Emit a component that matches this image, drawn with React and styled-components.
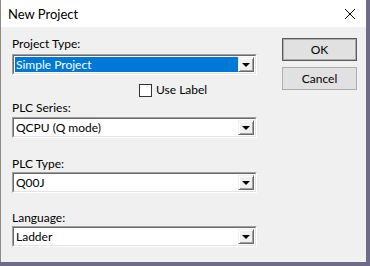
import React from 'react';
import styled, { createGlobalStyle } from 'styled-components';

const GlobalStyle = createGlobalStyle`
  html, body {
    margin: 0;
    padding: 0;
    background: #6e6b88;
  }
  body {
    width: 370px;
    height: 266px;
    overflow: hidden;
    font-family: Lato, "Noto Sans", sans-serif;
    font-size: 12px;
    color: #000;
  }
`;

const Window = styled.div`
  width: 365px;
  height: 262px;
  border-left: 1px solid #8a8a8a;
  background: #f0f0f0;
  display: flex;
  flex-direction: column;
`;

const TitleBar = styled.div`
  height: 27px;
  background: #fff;
  display: flex;
  align-items: center;
  justify-content: space-between;
  padding: 0 8px 0 7px;
  font-size: 13px;
  flex-shrink: 0;
`;

const CloseButton = styled.svg`
  width: 12px;
  height: 12px;
  margin-right: 2px;
`;

const Content = styled.div`
  display: flex;
  padding: 0 0 0 11px;
`;

const FormColumn = styled.div`
  width: 245px;
  display: flex;
  flex-direction: column;
`;

const ButtonColumn = styled.div`
  margin-left: 25px;
  padding-top: 11px;
  display: flex;
  flex-direction: column;
  gap: 6px;
`;

const Label = styled.div`
  line-height: 16px;
  margin-top: ${({ $top }) => $top}px;
  margin-bottom: ${({ $bottom }) => $bottom}px;
`;

const Combo = styled.div`
  height: 21px;
  box-sizing: border-box;
  border-top: 1px solid #a0a0a0;
  border-left: 1px solid #a0a0a0;
  border-bottom: 1px solid #fff;
  border-right: 1px solid #fff;
  display: flex;
`;

const ComboInner = styled.div`
  flex: 1;
  display: flex;
  border-top: 1px solid #696969;
  border-left: 1px solid #696969;
  border-bottom: 1px solid #e3e3e3;
  border-right: 1px solid #e3e3e3;
  background: #fff;
  padding: 1px;
`;

const ComboText = styled.div`
  flex: 1;
  display: flex;
  align-items: center;
  padding-left: 1px;
  line-height: 15px;
  background: ${({ $selected }) => ($selected ? '#0078d7' : '#fff')};
  color: ${({ $selected }) => ($selected ? '#fff' : '#000')};
`;

const ArrowButton = styled.div`
  width: 16px;
  box-sizing: border-box;
  background: #f0f0f0;
  border-top: 1px solid #f0f0f0;
  border-left: 1px solid #f0f0f0;
  border-bottom: 1px solid #696969;
  border-right: 1px solid #696969;
  box-shadow: inset 1px 1px 0 #fff, inset -1px -1px 0 #a0a0a0;
  display: flex;
  align-items: center;
  justify-content: center;
`;

const Arrow = styled.div`
  width: 0;
  height: 0;
  border-left: 4px solid transparent;
  border-right: 4px solid transparent;
  border-top: 4px solid #000;
  margin-top: 1px;
`;

const CheckRow = styled.label`
  display: flex;
  align-items: center;
  gap: 4px;
  margin: 7px 0 0 127px;
  line-height: 16px;
`;

const CheckBox = styled.span`
  width: 13px;
  height: 13px;
  box-sizing: border-box;
  border: 1px solid #333;
  background: #fff;
`;

const Button = styled.div`
  width: 75px;
  height: 23px;
  box-sizing: border-box;
  background: #e1e1e1;
  border: 1px solid ${({ $default }) => ($default ? '#5a5a5a' : '#adadad')};
  box-shadow: ${({ $default }) => ($default ? 'inset 0 0 0 1px #adadad' : 'none')};
  display: flex;
  align-items: center;
  justify-content: center;
`;

function DropDown({ value, selected }) {
  return (
    <Combo>
      <ComboInner>
        <ComboText $selected={selected}>{value}</ComboText>
        <ArrowButton>
          <Arrow />
        </ArrowButton>
      </ComboInner>
    </Combo>
  );
}

export default function App() {
  return (
    <>
      <GlobalStyle />
      <Window>
        <TitleBar>
          <span>New Project</span>
          <CloseButton viewBox="0 0 12 12">
            <path d="M1 1 L11 11 M11 1 L1 11" stroke="#000" strokeWidth="1" fill="none" />
          </CloseButton>
        </TitleBar>
        <Content>
          <FormColumn>
            <Label $top={9} $bottom={2}>Project Type:</Label>
            <DropDown value="Simple Project" selected />
            <CheckRow>
              <CheckBox />
              <span>Use Label</span>
            </CheckRow>
            <Label $top={2} $bottom={1}>PLC Series:</Label>
            <DropDown value="QCPU (Q mode)" />
            <Label $top={18} $bottom={0}>PLC Type:</Label>
            <DropDown value="Q00J" />
            <Label $top={17} $bottom={0}>Language:</Label>
            <DropDown value="Ladder" />
          </FormColumn>
          <ButtonColumn>
            <Button $default>OK</Button>
            <Button>Cancel</Button>
          </ButtonColumn>
        </Content>
      </Window>
    </>
  );
}
